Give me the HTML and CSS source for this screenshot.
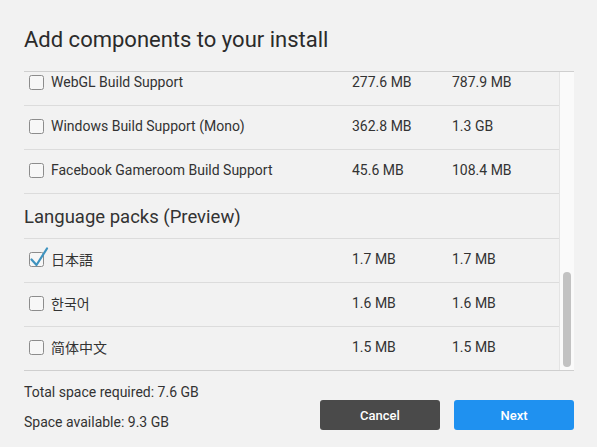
FILE: index.html
```html
<!DOCTYPE html>
<html lang="en">
<head>
<meta charset="utf-8">
<title>Add components to your install</title>
<link rel="stylesheet" href="styles.css">
</head>
<body>
<div class="dialog">
  <h1 class="title">Add components to your install</h1>
  <div class="listbox">
    <div class="list">
      <div class="row first">
        <div class="name"><svg class="cb" width="15" height="15" viewBox="0 0 15 15"><rect x="0.5" y="0.5" width="14" height="14" rx="2"/></svg><span>WebGL Build Support</span></div>
        <div class="size">277.6 MB</div>
        <div class="size">787.9 MB</div>
      </div>
      <div class="row">
        <div class="name"><svg class="cb" width="15" height="15" viewBox="0 0 15 15"><rect x="0.5" y="0.5" width="14" height="14" rx="2"/></svg><span>Windows Build Support (Mono)</span></div>
        <div class="size">362.8 MB</div>
        <div class="size">1.3 GB</div>
      </div>
      <div class="row">
        <div class="name"><svg class="cb" width="15" height="15" viewBox="0 0 15 15"><rect x="0.5" y="0.5" width="14" height="14" rx="2"/></svg><span>Facebook Gameroom Build Support</span></div>
        <div class="size">45.6 MB</div>
        <div class="size">108.4 MB</div>
      </div>
      <div class="section">Language packs (Preview)</div>
      <div class="row">
        <div class="name"><svg class="cb checked" width="15" height="15" viewBox="0 0 15 15"><rect x="0.5" y="0.5" width="14" height="14" rx="2"/><path d="M2.5 7.5 L7.5 13 L18 -3.5"/></svg><span class="cjk jp">日本語</span></div>
        <div class="size">1.7 MB</div>
        <div class="size">1.7 MB</div>
      </div>
      <div class="row">
        <div class="name"><svg class="cb" width="15" height="15" viewBox="0 0 15 15"><rect x="0.5" y="0.5" width="14" height="14" rx="2"/></svg><span class="cjk kr">한국어</span></div>
        <div class="size">1.6 MB</div>
        <div class="size">1.6 MB</div>
      </div>
      <div class="row">
        <div class="name"><svg class="cb" width="15" height="15" viewBox="0 0 15 15"><rect x="0.5" y="0.5" width="14" height="14" rx="2"/></svg><span class="cjk sc">简体中文</span></div>
        <div class="size">1.5 MB</div>
        <div class="size">1.5 MB</div>
      </div>
    </div>
    <div class="track"><div class="thumb"></div></div>
  </div>
  <div class="footer">
    <div class="space">
      <div>Total space required: 7.6 GB</div>
      <div>Space available: 9.3 GB</div>
    </div>
    <div class="buttons">
      <button class="btn cancel">Cancel</button>
      <button class="btn next">Next</button>
    </div>
  </div>
</div>
</body>
</html>
```
FILE: styles.css
```css
html, body {
  margin: 0;
  padding: 0;
  background: #f2f2f2;
}
body {
  font-family: Roboto, "Liberation Sans", sans-serif;
  color: #333;
  width: 597px;
  height: 447px;
  overflow: hidden;
}
.dialog {
  padding: 0 23px 0 24px;
}
.title {
  margin: 0 0 17px 0;
  padding-top: 26px;
  font-size: 22px;
  line-height: 28px;
  font-weight: 400;
  color: #2b2b2b;
}
.listbox {
  display: flex;
  height: 298px;
  border-top: 1px solid #cfcfcf;
  border-bottom: 1px solid #cfcfcf;
}
.list {
  flex: 1;
  overflow: hidden;
}
.row {
  display: grid;
  grid-template-columns: 328px 100px 1fr;
  align-items: center;
  height: 40px;
  padding-bottom: 3px;
  border-bottom: 1px solid #dcdcdc;
  font-size: 14px;
}
.row.first {
  margin-top: -10px;
}
.name {
  display: flex;
  align-items: center;
  padding-left: 5px;
  gap: 7px;
}
.cb {
  flex: none;
  overflow: visible;
}
.cb rect {
  fill: #f7f7f7;
  stroke: #8c8c8c;
  stroke-width: 1;
}
.cb path {
  fill: none;
  stroke: #3f93bf;
  stroke-width: 2.2;
  stroke-linecap: round;
  stroke-linejoin: round;
}
.cjk.jp { font-family: Roboto, "Noto Sans CJK JP", sans-serif; }
.cjk.kr { font-family: Roboto, "Noto Sans CJK KR", sans-serif; }
.cjk.sc { font-family: Roboto, "Noto Sans CJK SC", sans-serif; }
.section {
  height: 41px;
  padding-top: 3px;
  line-height: 41px;
  font-size: 18.5px;
  color: #333;
  border-bottom: 1px solid #dcdcdc;
}
.track {
  width: 14px;
  background: #fafafa;
  border-left: 1px solid #e4e4e4;
  display: flex;
  justify-content: center;
}
.thumb {
  width: 8px;
  height: 95px;
  margin-top: 200px;
  border-radius: 4px;
  background: #c2c2c2;
}
.footer {
  display: flex;
  justify-content: space-between;
  padding-top: 6px;
}
.space {
  font-size: 14px;
  line-height: 30px;
  color: #333;
}
.buttons {
  display: flex;
  gap: 14px;
  margin-top: 23px;
}
.btn {
  width: 120px;
  height: 30px;
  border: none;
  border-radius: 3px;
  color: #fff;
  font-family: Roboto, "Liberation Sans", sans-serif;
  font-size: 13px;
  font-weight: 500;
  padding: 0;
}
.cancel { background: #4a4a4a; }
.next { background: #1f91f0; }
```
